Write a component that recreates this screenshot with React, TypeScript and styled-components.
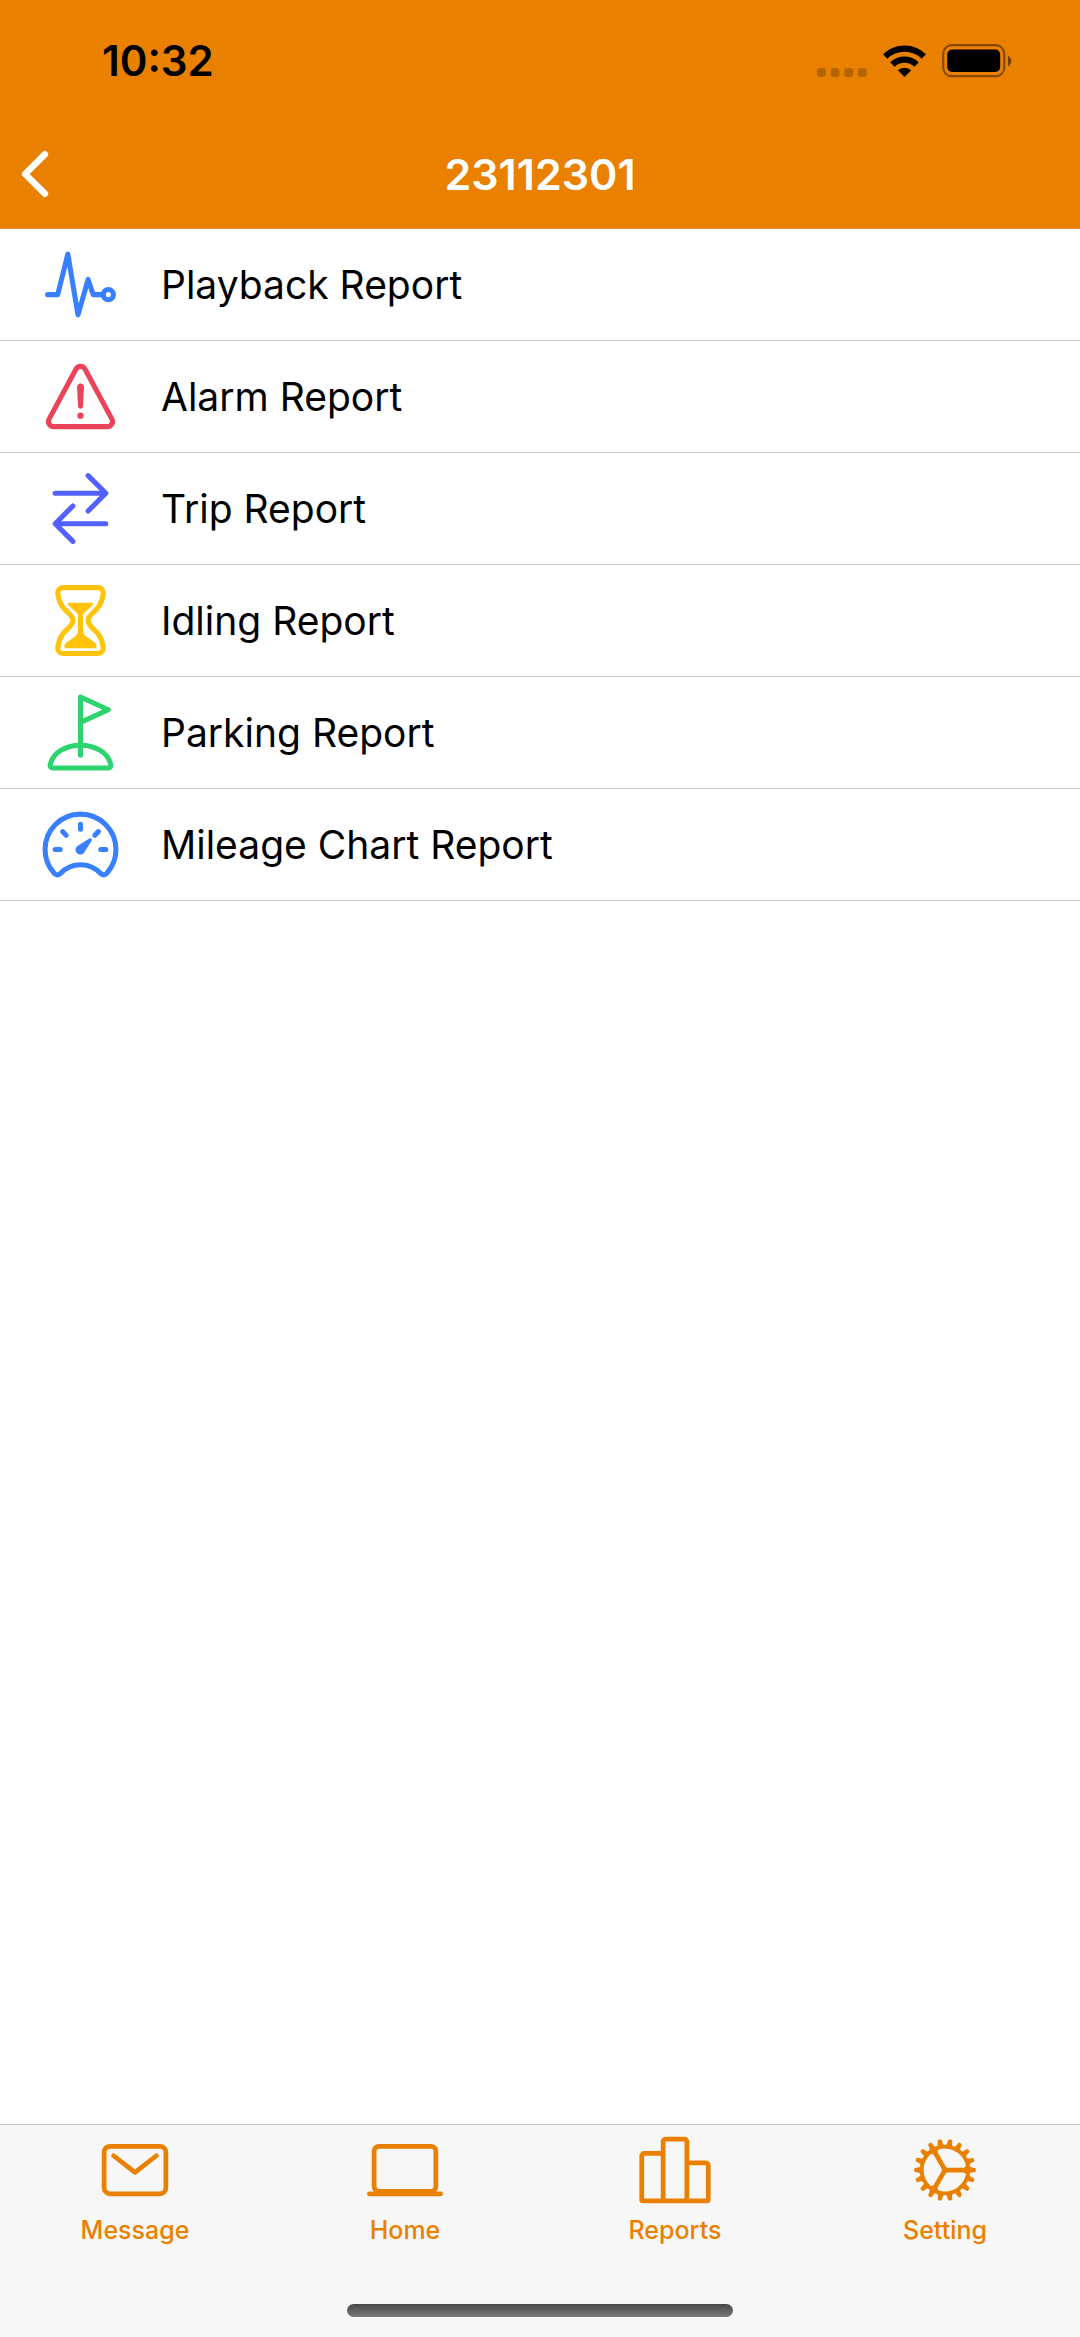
import React from 'react';
import styled, { createGlobalStyle } from 'styled-components';
import type { IconType } from 'react-icons';
import {
  IoChevronBack,
  IoCogOutline,
  IoGolfOutline,
  IoHourglassOutline,
  IoLaptopOutline,
  IoMailOutline,
  IoPodiumOutline,
  IoPulseOutline,
  IoSpeedometerOutline,
  IoSwapHorizontalOutline,
  IoWarningOutline,
} from 'react-icons/io5';

const ORANGE = '#ea8000';

const GlobalStyle = createGlobalStyle`
  *, *::before, *::after {
    box-sizing: border-box;
  }

  body {
    margin: 0;
    background: #ffffff;
    font-family: Inter, 'Liberation Sans', sans-serif;
    color: #000000;
  }
`;

const Screen = styled.div`
  display: flex;
  flex-direction: column;
  min-height: 100vh;
`;

const Header = styled.header`
  background: ${ORANGE};
  border-bottom: 1px solid #d98a3a;
`;

const StatusBar = styled.div`
  display: flex;
  align-items: center;
  justify-content: space-between;
  height: 120px;
  padding: 2px 68px 0 102px;
`;

const Clock = styled.time`
  font-size: 42px;
  line-height: 48px;
  font-weight: 600;
`;

const StatusIcons = styled.div`
  display: flex;
  align-items: center;
  gap: 16px;
`;

const NavBar = styled.div`
  display: grid;
  grid-template-columns: 70px 1fr 70px;
  align-items: center;
  height: 108px;
`;

const BackButton = styled.button`
  display: flex;
  padding: 0;
  border: 0;
  background: none;
  color: #ffffff;
  cursor: pointer;
`;

const Title = styled.h1`
  margin: 0;
  font-size: 43px;
  line-height: 48px;
  font-weight: 600;
  text-align: center;
  color: #ffffff;
`;

const Main = styled.main`
  flex: 1;
`;

const ReportList = styled.ul`
  margin: 0;
  padding: 0;
  list-style: none;
`;

const ReportLink = styled.a`
  display: flex;
  align-items: center;
  gap: 40px;
  height: 112px;
  padding: 0 40px;
  border-bottom: 1px solid #c8c8cb;
  font-size: 39px;
  line-height: 48px;
  color: inherit;
  text-decoration: none;
`;

const RowIcon = styled.span<{ $color: string }>`
  display: flex;
  color: ${(p) => p.$color};
`;

const Footer = styled.footer`
  display: flex;
  flex-direction: column;
  align-items: center;
  border-top: 1px solid #c6c6c8;
  background: #f7f7f7;
`;

const Tabs = styled.nav`
  display: grid;
  grid-template-columns: repeat(4, 1fr);
  width: 100%;
  height: 179px;
  padding-top: 7px;
`;

const Tab = styled.a`
  display: flex;
  flex-direction: column;
  align-items: center;
  gap: 6px;
  font-size: 25px;
  line-height: 32px;
  font-weight: 500;
  color: ${ORANGE};
  text-decoration: none;
`;

const HomeIndicator = styled.div`
  width: 386px;
  height: 13px;
  margin-bottom: 20px;
  border-radius: 7px;
  background: linear-gradient(#484848, #7a7a7a);
`;

function CellularDots() {
  return (
    <svg width="50" height="32" viewBox="0 0 50 32" fill="#000000" fillOpacity="0.22" aria-hidden="true">
      {[0, 13.6, 27.2, 40.8].map((x) => (
        <rect key={x} x={x} y="23" width="9" height="9" rx="3" />
      ))}
    </svg>
  );
}

function WifiIcon() {
  return (
    <svg width="43" height="32" viewBox="0 0 43 32" aria-hidden="true">
      <g fill="none" stroke="#000000" strokeWidth="6.2">
        <path d="M2.2 11.4 A28 28 0 0 1 40.8 11.4" />
        <path d="M9.4 19.6 A17.4 17.4 0 0 1 33.6 19.6" />
      </g>
      <path d="M14.8 25.3 A9.8 9.8 0 0 1 28.2 25.3 L22 31.5 Q21.5 32 21 31.5 Z" fill="#000000" />
    </svg>
  );
}

function BatteryIcon() {
  return (
    <svg width="70" height="34" viewBox="0 0 70 34" aria-hidden="true">
      <rect x="1.2" y="1.2" width="61" height="31" rx="8.5" fill="none" stroke="#000000" strokeOpacity="0.42" strokeWidth="2.2" />
      <rect x="5.2" y="5.5" width="53" height="22.5" rx="5" fill="#000000" />
      <path d="M66 11.5 Q69.3 13.6 69.3 17 Q69.3 20.4 66 22.5 Z" fill="#000000" fillOpacity="0.5" />
    </svg>
  );
}

interface Entry {
  label: string;
  icon: IconType;
  color?: string;
}

const reports: Entry[] = [
  { label: 'Playback Report', icon: IoPulseOutline, color: '#3880ff' },
  { label: 'Alarm Report', icon: IoWarningOutline, color: '#eb445a' },
  { label: 'Trip Report', icon: IoSwapHorizontalOutline, color: '#5260ff' },
  { label: 'Idling Report', icon: IoHourglassOutline, color: '#ffc409' },
  { label: 'Parking Report', icon: IoGolfOutline, color: '#2dd36f' },
  { label: 'Mileage Chart Report', icon: IoSpeedometerOutline, color: '#3880ff' },
];

const tabs: Entry[] = [
  { label: 'Message', icon: IoMailOutline },
  { label: 'Home', icon: IoLaptopOutline },
  { label: 'Reports', icon: IoPodiumOutline },
  { label: 'Setting', icon: IoCogOutline },
];

export default function App() {
  return (
    <Screen>
      <GlobalStyle />
      <Header>
        <StatusBar>
          <Clock>10:32</Clock>
          <StatusIcons>
            <CellularDots />
            <WifiIcon />
            <BatteryIcon />
          </StatusIcons>
        </StatusBar>
        <NavBar>
          <BackButton type="button" aria-label="Back">
            <IoChevronBack size={70} />
          </BackButton>
          <Title>23112301</Title>
        </NavBar>
      </Header>
      <Main>
        <ReportList>
          {reports.map(({ label, icon: Icon, color = ORANGE }) => (
            <li key={label}>
              <ReportLink href="#">
                <RowIcon $color={color}>
                  <Icon size={81} />
                </RowIcon>
                {label}
              </ReportLink>
            </li>
          ))}
        </ReportList>
      </Main>
      <Footer>
        <Tabs>
          {tabs.map(({ label, icon: Icon }) => (
            <Tab key={label} href="#">
              <Icon size={76} />
              {label}
            </Tab>
          ))}
        </Tabs>
        <HomeIndicator />
      </Footer>
    </Screen>
  );
}
